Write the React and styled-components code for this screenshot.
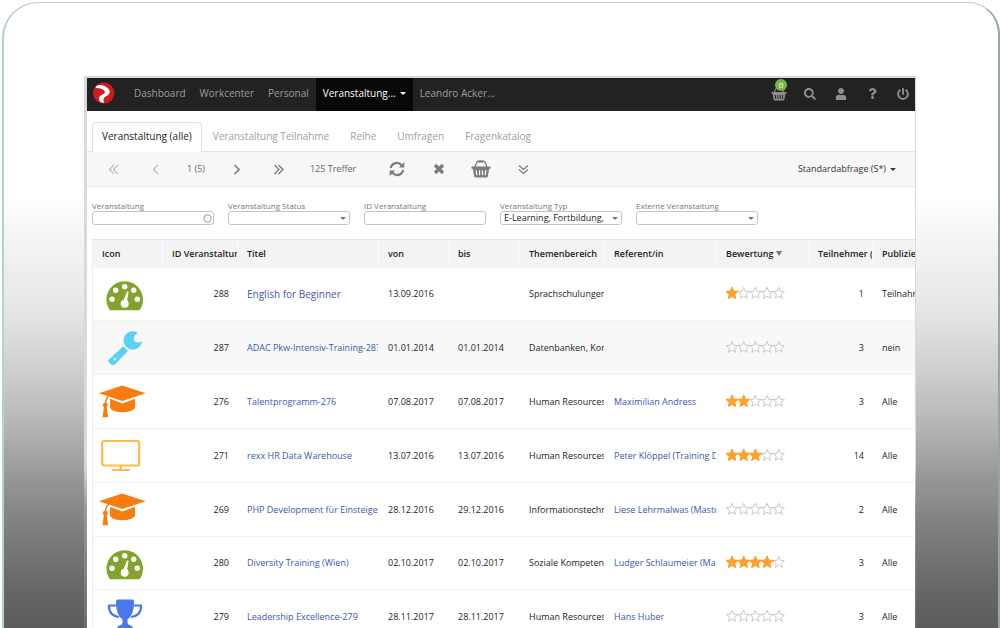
import styled, { createGlobalStyle, css } from "styled-components";
import { FaPowerOff, FaQuestion, FaSearch, FaUser } from "react-icons/fa";

const GlobalStyle = createGlobalStyle`
	* {
		box-sizing: border-box;
	}

	body {
		margin: 0;
		background: #fff;
		color: #1c1c1c;
		font-family: "Open Sans", "Noto Sans", sans-serif;
		font-size: 9px;
		line-height: 12px;
	}

	button,
	input,
	select {
		font: inherit;
		color: inherit;
	}

	button {
		border: 0;
		padding: 0;
		background: none;
		cursor: pointer;
	}

	a {
		text-decoration: none;
	}
`;

/* ---------- tablet ---------- */

const Page = styled.div`
	height: 100vh;
	padding: 2px 0 0 2px;
	overflow: hidden;
`;

const Device = styled.div`
	height: 100%;
	padding: 73px 82px 0 80px;
	border: 2px solid #b4d0d5;
	border-top-width: 1px;
	border-top-color: #bccdd1;
	border-right-color: #93a5a6;
	border-bottom: 0;
	border-radius: 36px 32px 0 0;
	background: linear-gradient(
		#fff 31%,
		#f5f5f5 37%,
		#e8e8e8 48%,
		#cecece 59%,
		#b4b4b4 68%,
		#979797 76%,
		#7c7c7c 85%,
		#676767 94%,
		#5c5c5c
	);
`;

const Bezel = styled.div`
	height: 100%;
	padding: 2px 1px 0 3px;
	background: linear-gradient(#d9d9d9 70%, #9c9c9c 78%, #6c6c6c);
`;

const Screen = styled.div`
	display: flex;
	flex-direction: column;
	height: 100%;
	overflow: hidden;
	background: #fff;
`;

/* ---------- navigation ---------- */

const NavBar = styled.header`
	display: flex;
	align-items: stretch;
	flex: none;
	height: 33px;
	padding-left: 6px;
	background: #222;
	font-size: 10px;
`;

const LogoLink = styled.a`
	display: flex;
	align-items: center;
	margin-right: 12px;
	padding-bottom: 3px;
`;

const NavLinks = styled.nav`
	display: flex;
	flex: 1;
`;

const NavLink = styled.a`
	display: flex;
	align-items: center;
	gap: 4px;
	padding: 0 7px 3px;
	color: ${({ $active }) => ($active ? "#fff" : "#9d9d9d")};
	background: ${({ $active }) => ($active ? "#080808" : "transparent")};
`;

const NavTools = styled.div`
	display: flex;
	gap: 7px;
	color: #8f8f8f;
`;

const NavTool = styled.button`
	display: flex;
	align-items: center;
	justify-content: center;
	position: relative;
	width: 24px;
	padding-bottom: 2px;
`;

const Badge = styled.span`
	position: absolute;
	top: 1px;
	left: 8px;
	width: 12px;
	height: 12px;
	border-radius: 6px;
	background: #78b543;
	color: #fff;
	font-size: 8px;
	line-height: 12px;
	text-align: center;
`;

/* ---------- tabs ---------- */

const Tabs = styled.nav`
	display: flex;
	flex: none;
	gap: 1px;
	padding: 11px 5px 0;
	border-bottom: 1px solid #e4e4e4;
	font-size: 10px;
`;

const Tab = styled.a`
	height: 29px;
	padding: 6px 9px 0;
	border: 1px solid transparent;
	border-bottom: 0;
	border-radius: 4px 4px 0 0;
	line-height: 14px;
	color: #a0a0a0;

	${({ $active }) =>
		$active &&
		css`
			margin-bottom: -1px;
			height: 30px;
			border-color: #e0e0e0;
			background: #fff;
			color: #222;
		`}
`;

/* ---------- toolbar ---------- */

const Toolbar = styled.div`
	display: flex;
	align-items: center;
	flex: none;
	height: 35px;
	padding: 0 19px 0 5px;
	border-bottom: 1px solid #e9e9e9;
	background: #f7f7f7;
	color: #666;
`;

const ToolButton = styled.button`
	display: flex;
	align-items: center;
	justify-content: center;
	width: 42px;
	height: 34px;
	color: ${({ $muted }) => ($muted ? "#bdbdbd" : "#7c7c7c")};
`;

const PageInfo = styled.span`
	padding: 0 11px;
`;

const HitCount = styled.span`
	padding: 0 20px 0 10px;
`;

const QueryButton = styled.button`
	display: flex;
	align-items: center;
	gap: 4px;
	margin-left: auto;
	color: #333;
`;

/* ---------- filters ---------- */

const Filters = styled.form`
	display: flex;
	flex: none;
	gap: 14px;
	padding: 13px 5px 14px;
`;

const Field = styled.div`
	width: 122px;
`;

const FieldLabel = styled.label`
	display: block;
	height: 11px;
	font-size: 8px;
	line-height: 11px;
	color: #777;
	white-space: nowrap;
`;

const Control = styled.div`
	position: relative;
	color: #222;
`;

const controlStyle = css`
	display: block;
	width: 100%;
	height: 14px;
	padding: 0 3px;
	border: 1px solid #c4c4c4;
	border-radius: 3px;
	background: #fff;
	line-height: 12px;
	appearance: none;
	outline: none;
`;

const TextInput = styled.input`
	${controlStyle}
`;

const SelectInput = styled.select`
	${controlStyle}
	padding-right: 14px;
`;

const ControlMark = styled.span`
	display: flex;
	align-items: center;
	position: absolute;
	top: 0;
	right: ${({ $wide }) => ($wide ? "2px" : "4px")};
	height: 14px;
	color: #777;
	pointer-events: none;
`;

/* ---------- table ---------- */

const TableArea = styled.div`
	flex: 1;
	min-height: 0;
	margin-left: 5px;
	overflow-x: hidden;
	overflow-y: auto;
	scrollbar-width: none;
	border-top: 1px solid #e4e4e4;
	border-left: 1px solid #ececec;
`;

const Table = styled.table`
	width: 100%;
	table-layout: fixed;
	border-collapse: separate;
	border-spacing: 0;
`;

const HeadCell = styled.th`
	height: 28px;
	padding: 0 0 0 9px;
	overflow: hidden;
	border-left: 1px solid #fafafa;
	background: #f3f3f3;
	font-weight: 600;
	text-align: left;
	white-space: nowrap;

	&:first-child {
		border-left: 0;
	}
`;

const SortMark = styled.svg`
	margin-left: 2px;
	vertical-align: 1px;
	color: #777;
`;

const Row = styled.tr`
	background: ${({ $shaded }) => ($shaded ? "#f8f8f8" : "#fff")};
`;

const Cell = styled.td`
	padding: 0 0 0 10px;
	overflow: hidden;
	border-bottom: 1px solid #f3f3f3;
	white-space: nowrap;
	vertical-align: middle;
`;

const NumberCell = styled(Cell)`
	padding: 0 8px 0 0;
	text-align: right;
`;

const IconCell = styled(Cell)`
	padding: 10px 0 9px 5px;
`;

const RatingCell = styled(Cell)`
	padding-bottom: 2px;
`;

const CellLink = styled.a`
	color: #4056b4;
	font-size: ${({ $large }) => ($large ? "10px" : "9px")};
`;

const Svg = styled.svg`
	display: block;
	flex: none;
	overflow: visible;
`;

/* ---------- drawings ---------- */

const Logo = () => (
	<Svg width="22" height="22" viewBox="0 0 22 22" role="img" aria-label="Logo">
		<circle cx="10.7" cy="11" r="10.6" fill="#d01c1f" />
		<path
			fill="#fff"
			d="M3 4.4C6 2.2 10.200 3 13.500 5.300C16.500 7.200 17.600 9.700 16 12C14.700 13.800 11.400 14.800 10.700 16.600C10.300 18 10.400 19 11.200 20.400C9.600 20.900 8 20.600 6.900 19.200C5.700 17.500 5.800 15.600 7.100 14C8.500 12.500 11.500 12 11.900 10.400C12.200 8.700 9.500 7.300 7.200 6.600C5.600 6.100 4.200 5.900 2.600 6.200Z"
		/>
	</Svg>
);

const Caret = ({ width = 6 }) => (
	<Svg width={width} height="3" viewBox="0 0 6 3">
		<path d="M0 0H6L3 3Z" fill="currentColor" />
	</Svg>
);

const arrows = {
	first: "M6 1 1.500 5.500 6 10M10 1 5.500 5.500 10 10",
	prev: "M8 1 3.500 5.500 8 10",
	next: "M3.500 1 8 5.500 3.500 10",
	last: "M1.500 1 6 5.500 1.500 10M5.500 1 10 5.500 5.500 10",
	more: "M1 1.500 5.500 5.500 10 1.500M1 5.500 5.500 9.500 10 5.500",
};

const Arrow = ({ name }) => (
	<Svg width="11" height="11" viewBox="0 0 11 11">
		<path
			d={arrows[name]}
			fill="none"
			stroke="currentColor"
			strokeWidth={name === "next" ? 1.7 : 1.3}
		/>
	</Svg>
);

const RefreshIcon = () => (
	<Svg width="16" height="16" viewBox="0 0 16 16">
		<g fill="none" stroke="currentColor" strokeWidth="2.200">
			<path d="M1.800 7A6.200 6.200 0 0 1 12.800 4.400" />
			<path d="M14.200 9A6.200 6.200 0 0 1 3.200 11.600" />
		</g>
		<path
			d="M15.300 1V6.500H9.800ZM0.700 15V9.500H6.200Z"
			fill="currentColor"
		/>
	</Svg>
);

const CrossIcon = () => (
	<Svg width="12" height="12" viewBox="0 0 12 12">
		<path
			d="M2 2 10 10M10 2 2 10"
			fill="none"
			stroke="currentColor"
			strokeWidth="3.400"
		/>
	</Svg>
);

const BasketIcon = ({ width = 20, height = 18 }) => (
	<Svg width={width} height={height} viewBox="0 0 20 18">
		<path
			d="M4 7 5.800 2.400Q6.200 1.400 7.200 1.400H12.800Q13.800 1.400 14.200 2.400L16 7"
			fill="none"
			stroke="currentColor"
			strokeWidth="1.300"
		/>
		<path d="M7.500 .4H12.500V2.600H7.500Z" fill="currentColor" />
		<path
			fillRule="evenodd"
			fill="currentColor"
			d="M1 6.500H19Q19.600 6.500 19.600 7.200V8.100Q19.600 8.800 19 8.800H18.200L16.900 16.200Q16.700 17.400 15.500 17.400H4.500Q3.300 17.400 3.100 16.200L1.800 8.800H1Q.4 8.800 .4 8.100V7.200Q.4 6.500 1 6.500ZM4.500 10.200 5.200 15.300H6.400L5.900 10.200ZM8 10.200V15.300H9.200V10.200ZM10.900 10.200V15.300H12.100V10.200ZM14.100 10.200 13.600 15.300H14.800L15.500 10.200Z"
		/>
	</Svg>
);

const GaugeIcon = () => (
	<Svg width="48" height="33" viewBox="0 0 48 33">
		<path
			d="M11.800 32.200A18.300 18.300 0 1 1 41.600 32.200Z"
			fill="#84a22e"
		/>
		<g fill="#fff">
			<circle cx="14" cy="21.300" r="2.700" />
			<circle cx="17.700" cy="12.300" r="2.700" />
			<circle cx="26.700" cy="8.700" r="2.700" />
			<circle cx="35.700" cy="12.300" r="2.700" />
			<circle cx="39.300" cy="21.300" r="2.700" />
			<circle cx="26.700" cy="25.800" r="4" />
			<path d="M24.800 24 29 13.400 30.600 13.800 28.700 25Z" />
		</g>
	</Svg>
);

const WrenchIcon = () => (
	<Svg width="48" height="34" viewBox="0 0 48 34">
		<g fill="#5fd0f5">
			<path d="M39.700 1.700 36.300 5Q34.800 8 36.800 10.600 40 12.400 43.900 10.200A9.200 9.200 0 1 1 39.700 1.700Z" />
			<path
				fillRule="evenodd"
				d="M25.300 15.300 30 20 17.200 33.200Q15.200 35.200 13 33.400L11.200 31.800Q9.200 30 11.200 28.200ZM16.700 27A1.300 1.300 0 1 0 16.700 29.600 1.300 1.300 0 1 0 16.700 27Z"
			/>
		</g>
	</Svg>
);

const CapIcon = () => (
	<Svg width="48" height="34" viewBox="0 0 48 34">
		<g fill="#f97c10">
			<path d="M.8 8.300 24.300 .6 47.700 8.300 24.300 15.900Z" />
			<path d="M12.100 13.800 24.300 18.600 37 13.800V23Q33 27.300 24.300 27.300 15.500 27.300 12.100 23Z" />
			<circle cx="7.300" cy="20.200" r="2.400" />
			<path d="M6 21.500H8.800L10.200 32.300H4.500Z" />
		</g>
		<path
			d="M11 10.800Q7.300 13.500 7.500 20"
			fill="none"
			stroke="#f97c10"
			strokeWidth="1.500"
		/>
	</Svg>
);

const MonitorIcon = () => (
	<Svg width="48" height="34" viewBox="0 0 48 34">
		<g fill="none" stroke="#fdbb4f" strokeWidth="2.200">
			<rect x="4.200" y="2" width="37" height="24.500" rx="2" />
			<path d="M22.700 26.500V31M13.700 31H31.700" />
		</g>
	</Svg>
);

const TrophyIcon = () => (
	<Svg width="48" height="34" viewBox="0 0 48 34">
		<path
			d="M18.500 5.500H11Q10.500 15.500 21 17M35.500 5.500H43Q43.500 15.500 33 17"
			fill="none"
			stroke="#4b78e8"
			strokeWidth="2.200"
		/>
		<path
			d="M18 1Q18-.5 19.500-.5H34.500Q36-.5 36 1 36.500 14 29.500 19.500V23Q30 25 33 25.500 35 26.500 35 29H19Q19 26.500 21 25.500 24 25 24.500 23V19.500Q17.500 14 18 1Z"
			fill="#4b78e8"
		/>
	</Svg>
);

const icons = {
	gauge: GaugeIcon,
	wrench: WrenchIcon,
	cap: CapIcon,
	monitor: MonitorIcon,
	trophy: TrophyIcon,
};

const STAR_STEP = 11.7;
const starPath =
	"M6 .4 7.600 4.200 11.600 4.500 8.500 7.200 9.500 11.300 6 9.100 2.500 11.300 3.500 7.200 .4 4.500 4.400 4.200Z";

const Rating = ({ id, value }) => (
	<Svg
		width="59"
		height="12"
		viewBox="0 0 59 12"
		role="img"
		aria-label={`${value} / 5`}
	>
		<clipPath id={`rating-${id}`}>
			<rect y="-1" width={value * STAR_STEP} height="14" />
		</clipPath>
		{[0, 1, 2, 3, 4].map((n) => (
			<path
				key={n}
				d={starPath}
				transform={`translate(${n * STAR_STEP} 0)`}
				fill="#fff"
				stroke="#c2c2c2"
				strokeWidth=".9"
			/>
		))}
		<g clipPath={`url(#rating-${id})`}>
			{[0, 1, 2, 3, 4].map((n) => (
				<path
					key={n}
					d={starPath}
					transform={`translate(${n * STAR_STEP} 0)`}
					fill="#ffa22b"
					stroke="#ffa22b"
					strokeWidth="1.300"
					strokeLinejoin="round"
				/>
			))}
		</g>
	</Svg>
);

/* ---------- data ---------- */

const navItems = [
	{ label: "Dashboard" },
	{ label: "Workcenter" },
	{ label: "Personal" },
	{ label: "Veranstaltung...", active: true },
	{ label: "Leandro Acker..." },
];

const tabs = [
	"Veranstaltung (alle)",
	"Veranstaltung Teilnahme",
	"Reihe",
	"Umfragen",
	"Fragenkatalog",
];

const filters = [
	{ id: "event", label: "Veranstaltung", type: "lookup" },
	{ id: "status", label: "Veranstaltung Status", type: "select" },
	{ id: "eventId", label: "ID Veranstaltung", type: "text" },
	{
		id: "type",
		label: "Veranstaltung Typ",
		type: "select",
		value: "E-Learning, Fortbildung,",
	},
	{ id: "external", label: "Externe Veranstaltung", type: "select" },
];

const columns = [
	{ label: "Icon", width: 69 },
	{ label: "ID Veranstaltung", width: 75 },
	{ label: "Titel", width: 141 },
	{ label: "von", width: 70 },
	{ label: "bis", width: 71 },
	{ label: "Themenbereich", width: 85 },
	{ label: "Referent/in", width: 112 },
	{ label: "Bewertung", width: 92, sorted: true },
	{ label: "Teilnehmer (", width: 64 },
	{ label: "Publizieren" },
];

const events = [
	{
		id: 288,
		icon: "gauge",
		title: "English for Beginner",
		from: "13.09.2016",
		topic: "Sprachschulungen",
		rating: 1,
		members: 1,
		published: "Teilnahme",
		large: true,
	},
	{
		id: 287,
		icon: "wrench",
		title: "ADAC Pkw-Intensiv-Training-287",
		from: "01.01.2014",
		to: "01.01.2014",
		topic: "Datenbanken, Kon",
		rating: 0,
		members: 3,
		published: "nein",
	},
	{
		id: 276,
		icon: "cap",
		title: "Talentprogramm-276",
		from: "07.08.2017",
		to: "07.08.2017",
		topic: "Human Resources",
		speaker: "Maximilian Andress",
		rating: 2,
		members: 3,
		published: "Alle",
	},
	{
		id: 271,
		icon: "monitor",
		title: "rexx HR Data Warehouse",
		from: "13.07.2016",
		to: "13.07.2016",
		topic: "Human Resources",
		speaker: "Peter Klöppel (Training D",
		rating: 3.1,
		members: 14,
		published: "Alle",
	},
	{
		id: 269,
		icon: "cap",
		title: "PHP Development für Einsteige",
		from: "28.12.2016",
		to: "29.12.2016",
		topic: "Informationstechn",
		speaker: "Liese Lehrmalwas (Maste",
		rating: 0,
		members: 2,
		published: "Alle",
	},
	{
		id: 280,
		icon: "gauge",
		title: "Diversity Training (Wien)",
		from: "02.10.2017",
		to: "02.10.2017",
		topic: "Soziale Kompetenz",
		speaker: "Ludger Schlaumeier (Ma",
		rating: 4.1,
		members: 3,
		published: "Alle",
	},
	{
		id: 279,
		icon: "trophy",
		title: "Leadership Excellence-279",
		from: "28.11.2017",
		to: "28.11.2017",
		topic: "Human Resources",
		speaker: "Hans Huber",
		rating: 0,
		members: 3,
		published: "Alle",
	},
];

/* ---------- parts ---------- */

const Navigation = () => (
	<NavBar>
		<LogoLink href="#" aria-label="Start">
			<Logo />
		</LogoLink>
		<NavLinks>
			{navItems.map(({ label, active }) => (
				<NavLink key={label} href="#" $active={active}>
					{label}
					{active && <Caret />}
				</NavLink>
			))}
		</NavLinks>
		<NavTools>
			<NavTool aria-label="Warenkorb">
				<BasketIcon width={16} height={14} />
				<Badge>0</Badge>
			</NavTool>
			<NavTool aria-label="Suche">
				<FaSearch size={12} />
			</NavTool>
			<NavTool aria-label="Profil">
				<FaUser size={12} />
			</NavTool>
			<NavTool aria-label="Hilfe">
				<FaQuestion size={11} />
			</NavTool>
			<NavTool aria-label="Abmelden">
				<FaPowerOff size={12} />
			</NavTool>
		</NavTools>
	</NavBar>
);

const Actions = () => (
	<Toolbar>
		<ToolButton $muted aria-label="Erste Seite">
			<Arrow name="first" />
		</ToolButton>
		<ToolButton $muted aria-label="Vorherige Seite">
			<Arrow name="prev" />
		</ToolButton>
		<PageInfo>1 (5)</PageInfo>
		<ToolButton aria-label="Nächste Seite">
			<Arrow name="next" />
		</ToolButton>
		<ToolButton aria-label="Letzte Seite">
			<Arrow name="last" />
		</ToolButton>
		<HitCount>125 Treffer</HitCount>
		<ToolButton aria-label="Aktualisieren">
			<RefreshIcon />
		</ToolButton>
		<ToolButton aria-label="Zurücksetzen">
			<CrossIcon />
		</ToolButton>
		<ToolButton aria-label="In den Warenkorb">
			<BasketIcon />
		</ToolButton>
		<ToolButton aria-label="Mehr">
			<Arrow name="more" />
		</ToolButton>
		<QueryButton>
			Standardabfrage (S*)
			<Caret />
		</QueryButton>
	</Toolbar>
);

const Filter = ({ id, label, type, value = "" }) => (
	<Field>
		<FieldLabel htmlFor={id}>{label}</FieldLabel>
		<Control>
			{type === "select" ? (
				<SelectInput id={id} defaultValue={value}>
					<option value={value}>{value}</option>
				</SelectInput>
			) : (
				<TextInput id={id} type="text" />
			)}
			{type === "select" && (
				<ControlMark>
					<Caret />
				</ControlMark>
			)}
			{type === "lookup" && (
				<ControlMark $wide>
					<Svg width="9" height="9" viewBox="0 0 9 9">
						<circle
							cx="4.500"
							cy="4.500"
							r="3.600"
							fill="none"
							stroke="#aaa"
							strokeWidth="1.200"
						/>
					</Svg>
				</ControlMark>
			)}
		</Control>
	</Field>
);

const EventRow = ({ event, shaded }) => {
	const Icon = icons[event.icon];

	return (
		<Row $shaded={shaded}>
			<IconCell>
				<Icon />
			</IconCell>
			<NumberCell>{event.id}</NumberCell>
			<Cell>
				<CellLink href="#" $large={event.large}>
					{event.title}
				</CellLink>
			</Cell>
			<Cell>{event.from}</Cell>
			<Cell>{event.to}</Cell>
			<Cell>{event.topic}</Cell>
			<Cell>
				{event.speaker && <CellLink href="#">{event.speaker}</CellLink>}
			</Cell>
			<RatingCell>
				<Rating id={event.id} value={event.rating} />
			</RatingCell>
			<NumberCell>{event.members}</NumberCell>
			<Cell>{event.published}</Cell>
		</Row>
	);
};

const EventTable = () => (
	<TableArea>
		<Table>
			<colgroup>
				{columns.map(({ label, width }) => (
					<col key={label} width={width} />
				))}
			</colgroup>
			<thead>
				<tr>
					{columns.map(({ label, sorted }) => (
						<HeadCell key={label}>
							{label}
							{sorted && (
								<SortMark width="6" height="5" viewBox="0 0 6 5">
									<path d="M0 0H6L3 5Z" fill="currentColor" />
								</SortMark>
							)}
						</HeadCell>
					))}
				</tr>
			</thead>
			<tbody>
				{events.map((event, index) => (
					<EventRow key={event.id} event={event} shaded={index === 1} />
				))}
			</tbody>
		</Table>
	</TableArea>
);

const App = () => (
	<>
		<GlobalStyle />
		<Page>
			<Device>
				<Bezel>
					<Screen>
						<Navigation />
						<Tabs>
							{tabs.map((label, index) => (
								<Tab key={label} href="#" $active={index === 0}>
									{label}
								</Tab>
							))}
						</Tabs>
						<Actions />
						<Filters>
							{filters.map((filter) => (
								<Filter key={filter.id} {...filter} />
							))}
						</Filters>
						<EventTable />
					</Screen>
				</Bezel>
			</Device>
		</Page>
	</>
);

export default App;
